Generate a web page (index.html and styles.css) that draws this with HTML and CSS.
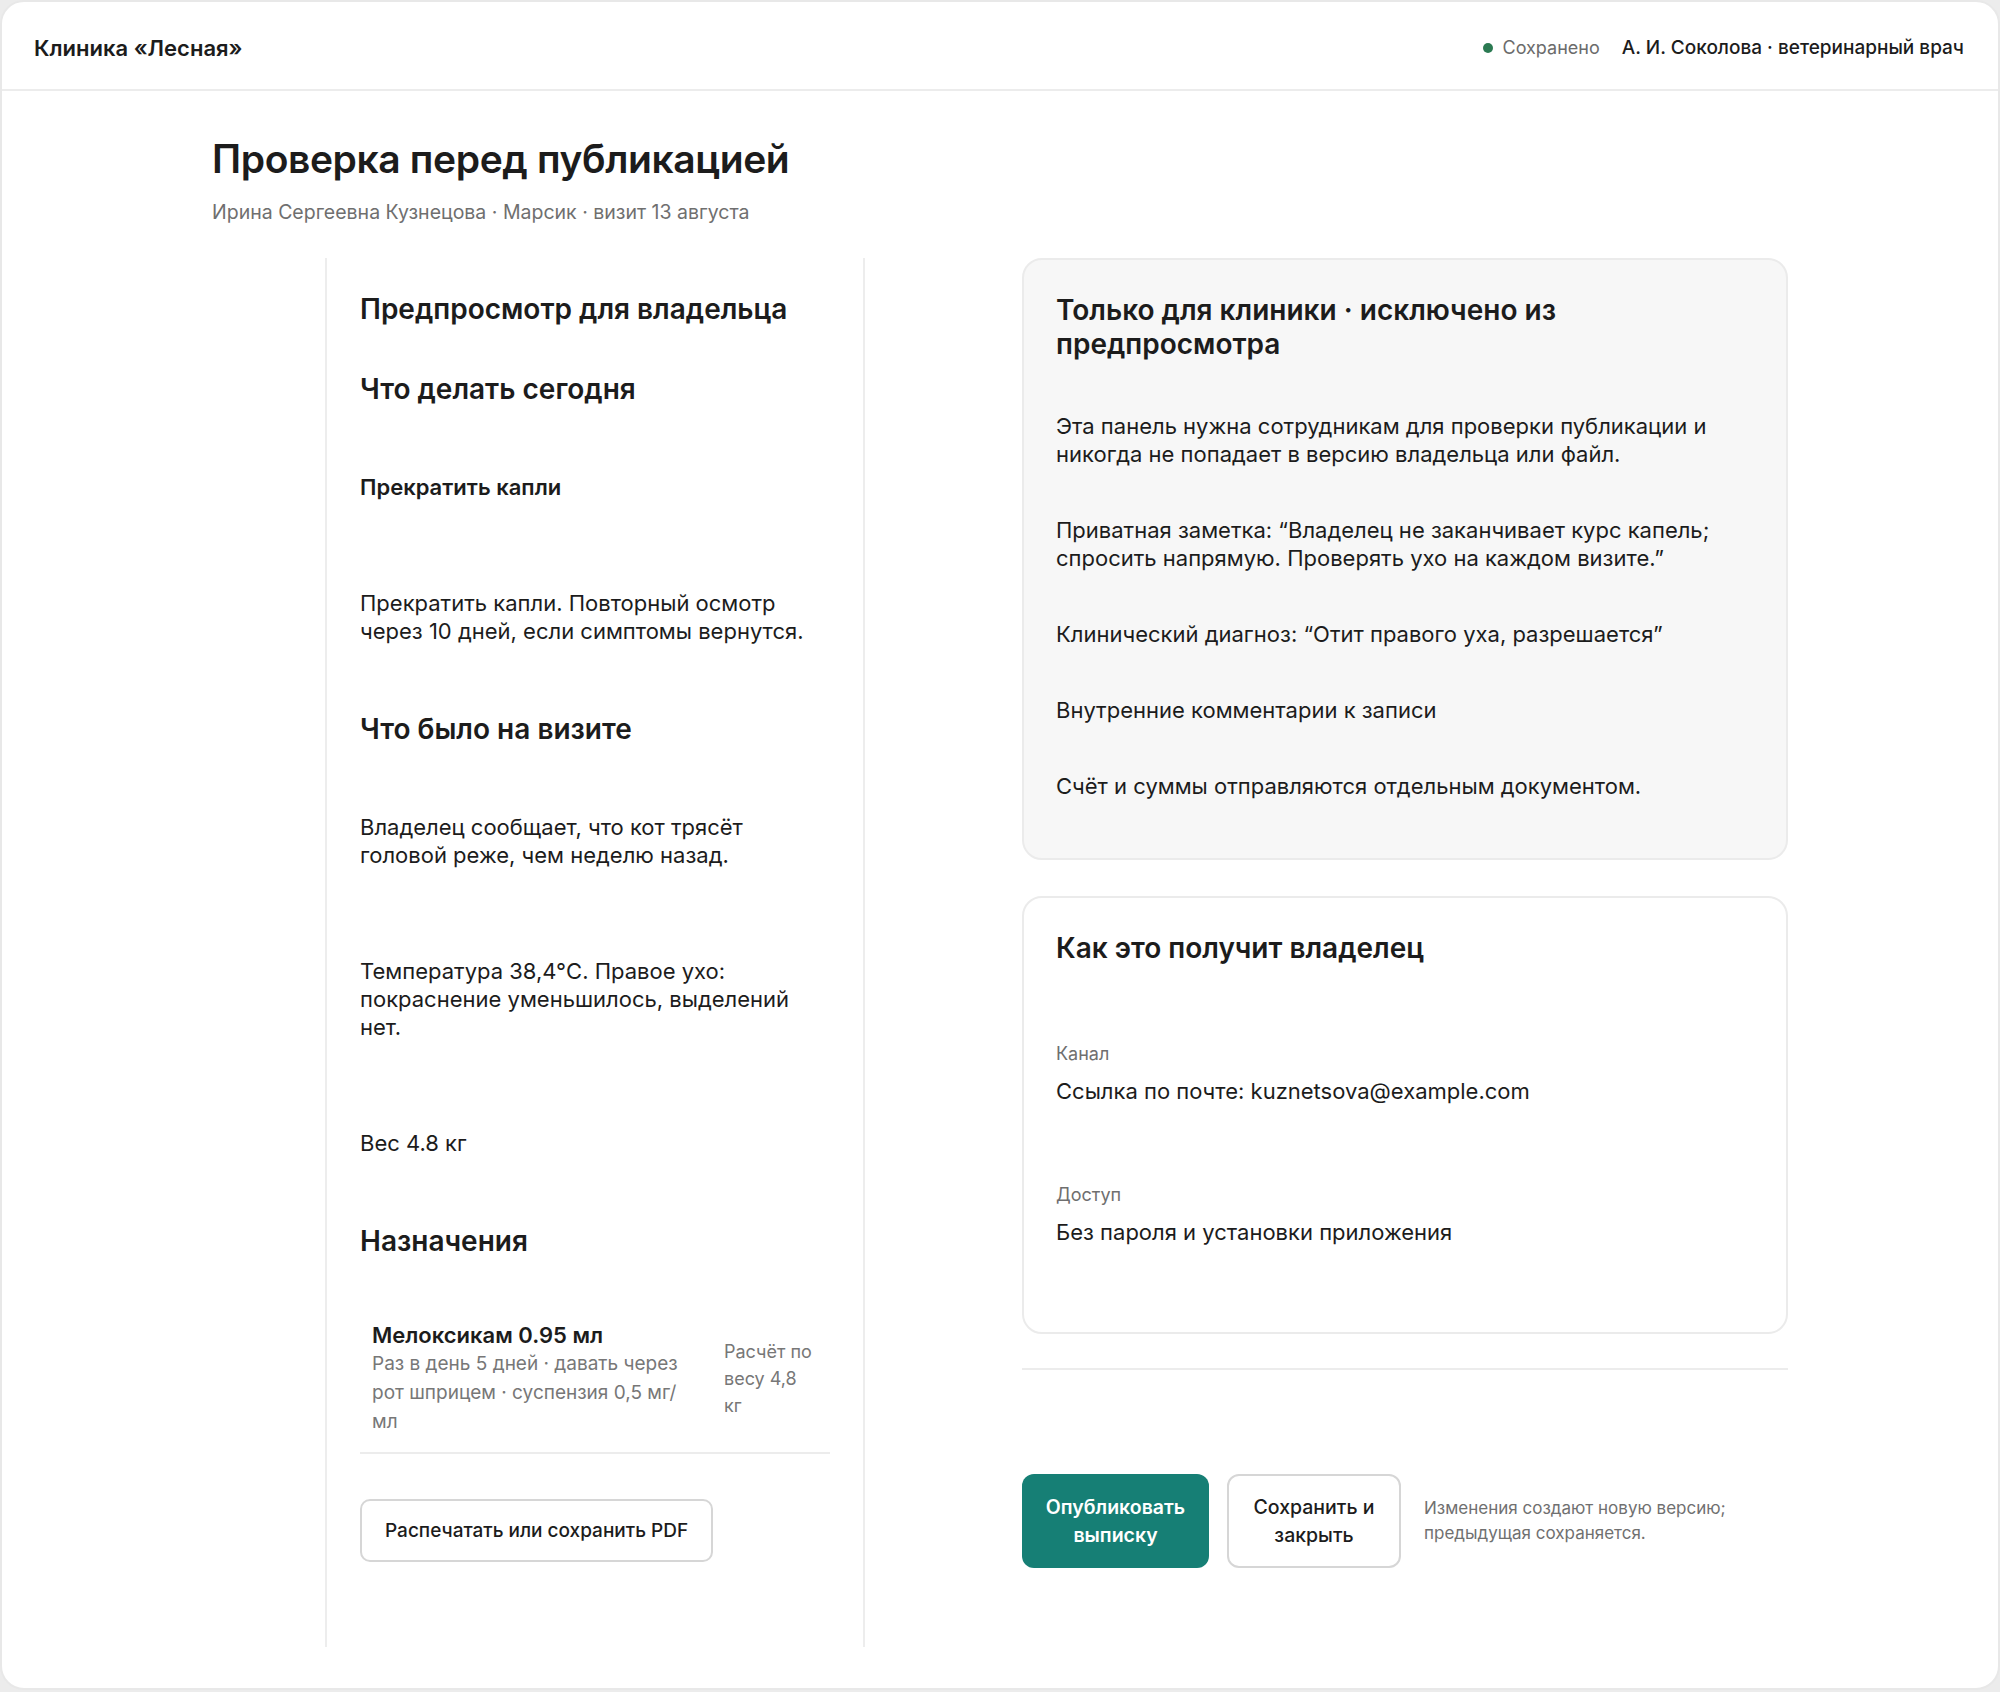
FILE: index.html
```html
<!DOCTYPE html>
<html lang="ru">
<head>
    <meta charset="UTF-8">
    <meta name="viewport" content="width=device-width, initial-scale=1.0">
    <title>Проверка перед публикацией · Клиника «Лесная»</title>
    <link rel="stylesheet" href="styles.css">
</head>
<body>

    <div class="app">
        <header class="topbar">
            <div class="brand">Клиника «Лесная»</div>
            <div class="topbar-right">
                <span class="saved"><span class="dot"></span>Сохранено</span>
                <span class="user">А. И. Соколова · ветеринарный врач</span>
            </div>
        </header>

        <main class="page">
            <h1 class="page-title">Проверка перед публикацией</h1>
            <div class="page-sub">Ирина Сергеевна Кузнецова · Марсик · визит 13 августа</div>

            <div class="layout">
                <!-- то, что увидит владелец -->
                <div class="preview-cell">
                    <div class="preview">
                        <h2 class="preview-title">Предпросмотр для владельца</h2>

                        <section class="section">
                            <h3 class="section-title">Что делать сегодня</h3>
                            <div class="block task-title">Прекратить капли</div>
                            <p class="block">Прекратить капли. Повторный осмотр через 10 дней, если симптомы вернутся.</p>
                        </section>

                        <section class="section">
                            <h3 class="section-title">Что было на визите</h3>
                            <p class="block">Владелец сообщает, что кот трясёт головой реже, чем неделю назад.</p>
                            <p class="block">Температура 38,4°C. Правое ухо: покраснение уменьшилось, выделений нет.</p>
                            <p class="block">Вес 4.8 кг</p>
                        </section>

                        <section class="section">
                            <h3 class="section-title">Назначения</h3>
                            <div class="med">
                                <div>
                                    <div class="med-name">Мелоксикам 0.95 мл</div>
                                    <div class="med-info">Раз в день 5 дней · давать через рот шприцем · суспензия 0,5 мг/мл</div>
                                </div>
                                <div class="med-calc">Расчёт по весу 4,8 кг</div>
                            </div>
                            <button class="btn btn-outline btn-print">Распечатать или сохранить PDF</button>
                        </section>
                    </div>
                </div>

                <!-- служебная часть -->
                <div class="side">
                    <div class="card card-muted">
                        <h2 class="card-title">Только для клиники · исключено из предпросмотра</h2>
                        <p>Эта панель нужна сотрудникам для проверки публикации и никогда не попадает в версию владельца или файл.</p>
                        <p>Приватная заметка: “Владелец не заканчивает курс капель; спросить напрямую. Проверять ухо на каждом визите.”</p>
                        <p>Клинический диагноз: “Отит правого уха, разрешается”</p>
                        <p>Внутренние комментарии к записи</p>
                        <p>Счёт и суммы отправляются отдельным документом.</p>
                    </div>

                    <div class="card card-delivery">
                        <h2 class="card-title">Как это получит владелец</h2>
                        <div class="field">
                            <div class="field-label">Канал</div>
                            <div class="field-value">Ссылка по почте: kuznetsova@example.com</div>
                        </div>
                        <div class="field">
                            <div class="field-label">Доступ</div>
                            <div class="field-value">Без пароля и установки приложения</div>
                        </div>
                    </div>

                    <div class="actions">
                        <button class="btn btn-primary">Опубликовать выписку</button>
                        <button class="btn btn-outline btn-save">Сохранить и закрыть</button>
                        <div class="actions-note">Изменения создают новую версию; предыдущая сохраняется.</div>
                    </div>
                </div>
            </div>
        </main>
    </div>

</body>
</html>
```

FILE: styles.css
```css
* {
    box-sizing: border-box;
}

body {
    margin: 0;
    background: #ececec;
    color: #1c1c1c;
    font-family: Inter, "Noto Sans", sans-serif;
}

.app {
    min-height: 1690px;
    background: #fff;
    border: 2px solid #e8e8e8;
    border-radius: 24px;
    overflow: hidden;
}

/* шапка */
.topbar {
    height: 89px;
    display: flex;
    align-items: center;
    justify-content: space-between;
    padding: 4px 34px 0 32px;
    border-bottom: 2px solid #ececec;
}

.brand {
    font-size: 22px;
    font-weight: 600;
}

.topbar-right {
    display: flex;
    align-items: center;
    gap: 22px;
}

.saved {
    display: flex;
    align-items: center;
    gap: 9px;
    font-size: 18px;
    color: #6b6b6b;
}

.dot {
    width: 10px;
    height: 10px;
    border-radius: 50%;
    background: #2b7a52;
}

.user {
    font-size: 19px;
    font-weight: 500;
}

/* страница */
.page {
    max-width: 1576px;
    margin: 0 auto;
    padding-top: 44px;
}

.page-title {
    margin: 0;
    font-size: 39px;
    line-height: 48px;
    font-weight: 600;
    letter-spacing: -0.01em;
}

.page-sub {
    margin-top: 16px;
    font-size: 19.5px;
    line-height: 26px;
    color: #6f6f6f;
}

.layout {
    display: grid;
    grid-template-columns: 1fr 1fr;
    gap: 44px;
    margin-top: 33px;
}

/* предпросмотр */
.preview {
    width: 540px;
    margin: 0 auto;
    padding: 34px 33px 85px;
    border-left: 2px solid #ededed;
    border-right: 2px solid #ededed;
}

.preview-title,
.section-title,
.card-title {
    margin: 0;
    font-size: 28px;
    line-height: 34px;
    font-weight: 600;
}

.preview-title {
    margin-bottom: 46px;
}

.section + .section {
    margin-top: 67px;
}

.section-title {
    margin-bottom: 67px;
}

.block {
    margin: 0;
    font-size: 22px;
    line-height: 28px;
}

.block + .block {
    margin-top: 88px;
}

.task-title {
    font-weight: 600;
}

.med {
    display: grid;
    grid-template-columns: 1fr 92px;
    gap: 32px;
    align-items: center;
    margin-top: -4px;
    padding: 0 14px 16px 12px;
    border-bottom: 2px solid #ececec;
}

.med-name {
    font-size: 22px;
    line-height: 28px;
    font-weight: 600;
}

.med-info {
    font-size: 19px;
    line-height: 29px;
    color: #777;
}

.med-calc {
    font-size: 18px;
    line-height: 27px;
    color: #777;
}

/* кнопки */
.btn {
    font-family: inherit;
    font-size: 19.5px;
    line-height: 28px;
    border-radius: 12px;
    cursor: pointer;
}

.btn-outline {
    background: #fff;
    color: #1c1c1c;
    border: 2px solid #d6d6d6;
    font-weight: 500;
}

.btn-print {
    display: block;
    margin-top: 45px;
    height: 63px;
    padding: 0 23px;
    font-size: 19px;
    border-radius: 10px;
}

.btn-primary {
    width: 187px;
    background: #167f75;
    color: #fff;
    border: none;
    font-weight: 600;
}

.btn-save {
    width: 174px;
}

/* правая колонка */
.card {
    border: 2px solid #ebebeb;
    border-radius: 20px;
    padding: 33px 32px 58px;
}

.card-muted {
    background: #f7f7f7;
}

.card p {
    margin: 0;
    font-size: 22px;
    line-height: 28px;
}

.card-muted .card-title {
    margin-bottom: 51px;
}

.card-muted p + p {
    margin-top: 48px;
}

.card-delivery {
    margin-top: 36px;
    padding-bottom: 86px;
}

.card-delivery .card-title {
    margin-bottom: 77px;
}

.field + .field {
    margin-top: 78px;
}

.field-label {
    font-size: 18px;
    line-height: 24px;
    color: #6f6f6f;
}

.field-value {
    margin-top: 11px;
    font-size: 22px;
    line-height: 28px;
}

.actions {
    display: flex;
    align-items: center;
    gap: 18px;
    margin-top: 34px;
    padding-top: 104px;
    border-top: 2px solid #ececec;
}

.btn-primary,
.btn-save {
    height: 94px;
    padding: 0 20px;
}

.actions-note {
    flex: 1;
    margin-left: 5px;
    font-size: 17px;
    line-height: 25px;
    color: #707070;
}
```
